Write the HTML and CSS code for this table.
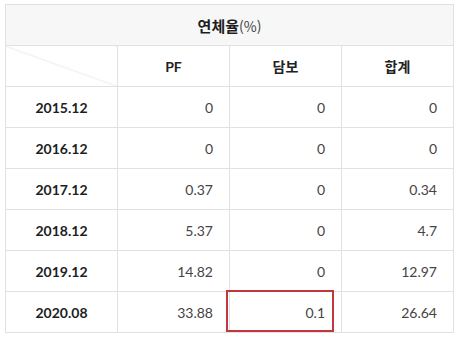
FILE: index.html
```html
<!DOCTYPE html>
<html lang="ko">
<head>
<meta charset="utf-8">
<link rel="stylesheet" href="styles.css">
</head>
<body>
<div class="wrap">
<table class="rate">
  <thead>
    <tr class="title-row"><th colspan="4"><span class="title">연체율</span><span class="unit">(%)</span></th></tr>
    <tr class="col-row"><th class="diag"></th><th>PF</th><th>담보</th><th>합계</th></tr>
  </thead>
  <tbody>
    <tr><th>2015.12</th><td>0</td><td>0</td><td>0</td></tr>
    <tr><th>2016.12</th><td>0</td><td>0</td><td>0</td></tr>
    <tr><th>2017.12</th><td>0.37</td><td>0</td><td>0.34</td></tr>
    <tr><th>2018.12</th><td>5.37</td><td>0</td><td>4.7</td></tr>
    <tr><th>2019.12</th><td>14.82</td><td>0</td><td>12.97</td></tr>
    <tr><th>2020.08</th><td>33.88</td><td class="mark">0.1</td><td>26.64</td></tr>
  </tbody>
</table>
<div class="highlight"></div>
</div>
</body>
</html>
```
FILE: styles.css
```css
html, body {
  margin: 0;
  padding: 0;
  background: #fff;
}
body {
  padding: 4px 0 0 5px;
  font-family: Lato, "Noto Sans CJK KR", sans-serif;
}
.wrap {
  position: relative;
  width: 449px;
}
.rate {
  border-collapse: collapse;
  table-layout: fixed;
  width: 449px;
}
.rate th, .rate td {
  border: 1px solid #e1e1e1;
  height: 41px;
  padding: 0;
  box-sizing: border-box;
  width: 112px;
}
.rate .title-row th {
  background: #f7f7f7;
  color: #222;
  font-weight: normal;
}
.title {
  font-family: "Noto Sans CJK KR", sans-serif;
  font-weight: 700;
  font-size: 15px;
  color: #1e1e1e;
}
.unit {
  font-family: "Noto Sans CJK KR", sans-serif;
  font-size: 14px;
  color: #444;
}
.rate .col-row th {
  font-size: 14px;
  font-weight: 700;
  color: #222;
}
.rate .col-row .diag {
  background: linear-gradient(to top right, transparent calc(50% - 0.6px), #e1e1e1 50%, transparent calc(50% + 0.6px));
}
.rate tbody th {
  font-size: 14px;
  font-weight: 700;
  color: #1e1e1e;
  text-align: center;
}
.rate tbody td {
  font-size: 14px;
  color: #444;
  text-align: right;
  padding-right: 16px;
}
.highlight {
  position: absolute;
  left: 221px;
  top: 286px;
  width: 108px;
  height: 42px;
  box-sizing: border-box;
  border: 2px solid #c1373b;
}
```
